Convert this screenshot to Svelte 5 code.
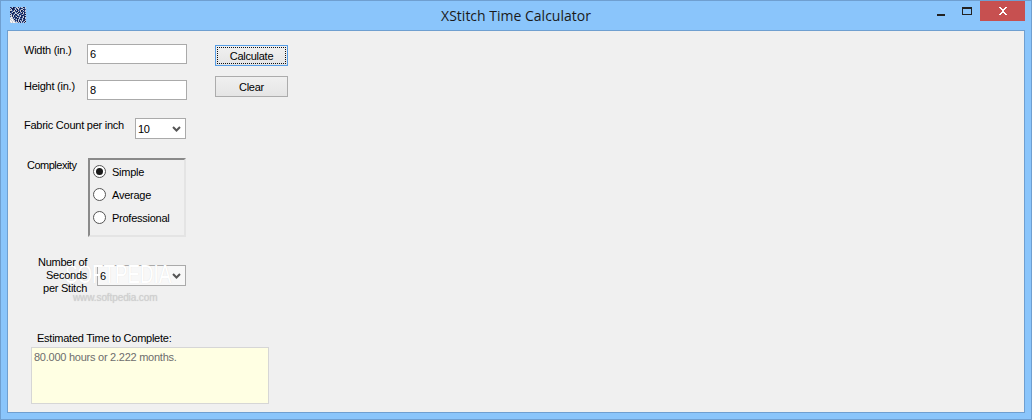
<script>
  // blotchy stitch pattern for the app icon, one char per pixel
  const stitches = [
    "ab.cab..a.b..ca.",
    ".aacb.a..bcab.b.",
    "b.caa.bc.ab..cab",
    "..ba.c.abb.ca.a.",
    "cab..bac.a.cbab.",
    "ab.ca.b.cab.a.cb",
    ".bcab..ab.bac.a.",
    "a.ab.ca..cab.bac",
    "..c.abab.b.acab.",
    "b.a.cb.cab.ab.ca",
    ".d.abac.b.acb.a.",
    "d..b.abca.bb.ac.",
    ".dd.cb.a.bca.bab",
    "d.d..abc.a.b.ca.",
    "dd.d.b.a.cb.ab.c",
    ".d.dd...b.a.b.a."
  ];
  const colors = { a: "#1b2b66", b: "#3f5f9f", c: "#0f1a42", d: "#f4f4f6" };
  const levels = ["Simple", "Average", "Professional"];
  let level = "Simple";
</script>

<div class="window">
  <header class="titlebar">
    <svg class="appicon" width="16" height="16" viewBox="0 0 16 16" shape-rendering="crispEdges">
      <rect width="16" height="16" fill="#c9cbd6" />
      {#each stitches as row, y}
        {#each row.split("") as c, x}
          {#if c !== "."}
            <rect {x} {y} width="1" height="1" fill={colors[c]} />
          {/if}
        {/each}
      {/each}
    </svg>
    <div class="title">XStitch Time Calculator</div>
    <div class="controls">
      <div class="ctl min"><span></span></div>
      <div class="ctl max"><span></span></div>
      <div class="ctl close">
        <svg width="10" height="8" viewBox="0 0 10 8" shape-rendering="crispEdges">
          <path d="M1 0h2v1h1v1h2V1h1V0h2v1H8v1H7v1H6v2h1v1h1v1h1v1H7V7H6V6H4v1H3v1H1V7h1V6h1V5h1V3H3V2H2V1H1z" fill="#fff" />
        </svg>
      </div>
    </div>
  </header>

  <main class="client">
    <div class="fields">
      <div class="row row-width">
        <span class="lbl">Width (in.)</span>
        <input class="box" value="6" />
      </div>
      <div class="row row-height">
        <span class="lbl">Height (in.)</span>
        <input class="box" value="8" />
      </div>
      <div class="row row-fabric">
        <span class="lbl">Fabric Count per inch</span>
        <div class="combo fabric"><span>10</span><svg class="chev" width="9" height="6" viewBox="0 0 9 6"><path d="M1 1l3.5 3.5L8 1" fill="none" stroke="#555" stroke-width="2" /></svg></div>
      </div>
      <div class="row row-complex">
        <span class="lbl">Complexity</span>
        <div class="group">
          {#each levels as l}
            <div class="radio">
              <span class="dot" class:on={l === level}></span>
              <span>{l}</span>
            </div>
          {/each}
        </div>
      </div>
      <div class="row row-seconds">
        <div class="combo seconds"><span class="val">6</span><svg class="chev" width="9" height="6" viewBox="0 0 9 6"><path d="M1 1l3.5 3.5L8 1" fill="none" stroke="#555" stroke-width="2" /></svg></div>
        <div class="mark">SOFTPEDIA</div>
        <div class="markurl">www.softpedia.com</div>
        <span class="lbl">Number of<br />Seconds<br />per Stitch</span>
      </div>
      <div class="result">
        <span class="lbl">Estimated Time to Complete:</span>
        <div class="output">80.000 hours or 2.222 months.</div>
      </div>
    </div>

    <div class="actions">
      <button class="btn focus"><span>Calculate</span></button>
      <button class="btn">Clear</button>
    </div>
  </main>
</div>

<style>
  :global(body) {
    margin: 0;
    background: #8ac5fb;
  }

  .window {
    width: 1032px;
    height: 420px;
    box-sizing: border-box;
    background: #8ac5fb;
    border: 1px solid #6f9fd0;
    display: flex;
    flex-direction: column;
    font-family: "Liberation Sans", sans-serif;
    font-size: 11px;
    letter-spacing: -0.25px;
    color: #000;
  }

  .titlebar {
    height: 29px;
    flex: none;
    display: flex;
    align-items: flex-start;
    position: relative;
  }

  .appicon {
    margin: 6px 0 0 9px;
  }

  .title {
    position: absolute;
    left: 0;
    right: 0;
    top: 5px;
    text-align: center;
    font-family: "Open Sans", sans-serif;
    font-size: 14px;
    letter-spacing: 0;
    color: #1a1a1a;
  }

  .controls {
    margin-left: auto;
    margin-right: 6px;
    display: flex;
  }

  .ctl {
    width: 26px;
    height: 20px;
    display: flex;
    align-items: center;
    justify-content: center;
  }

  .min span {
    width: 8px;
    height: 2px;
    background: #222;
    margin-top: 7px;
  }

  .max span {
    width: 10px;
    height: 8px;
    box-sizing: border-box;
    border: 1px solid #222;
    border-top-width: 2px;
    margin-top: -1px;
  }

  .close {
    width: 45px;
    background: #c75050;
  }

  .client {
    margin: 0 6px 6px 6px;
    flex: 1;
    border: 1px solid #6f9fd0;
    background: #f0f0f0;
    padding-left: 1px;
    display: flex;
    align-items: flex-start;
  }

  .fields {
    width: 206px;
    flex: none;
    display: flex;
    flex-direction: column;
  }

  .row {
    display: flex;
    align-items: flex-start;
    position: relative;
  }

  .lbl {
    white-space: nowrap;
  }

  .row-width {
    margin: 13px 0 0 15px;
  }

  .row-width .lbl,
  .row-height .lbl {
    width: 63px;
  }

  .row-height {
    margin: 16px 0 0 15px;
  }

  .box {
    width: 100px;
    height: 20px;
    box-sizing: border-box;
    border: 1px solid #aaa;
    background: #fff;
    padding: 0 2px 1px;
    font: inherit;
    letter-spacing: inherit;
    color: inherit;
    outline: none;
  }

  .row-fabric {
    margin: 18px 0 0 15px;
  }

  .row-fabric .lbl {
    width: 111px;
    margin-top: 1px;
  }

  .combo {
    height: 21px;
    box-sizing: border-box;
    border: 1px solid #aaa;
    background: #fff;
    display: flex;
    align-items: center;
    justify-content: space-between;
    padding: 0 4px 0 2px;
  }

  .fabric {
    width: 51px;
  }

  .row-complex {
    margin: 19px 0 0 18px;
  }

  .row-complex .lbl {
    width: 61px;
    margin-top: 1px;
    letter-spacing: -0.5px;
  }

  .group {
    width: 98px;
    height: 79px;
    box-sizing: border-box;
    border: 2px solid;
    border-color: #8a8a8a #e4e4e4 #e4e4e4 #8a8a8a;
    padding: 5px 0 0 3px;
    display: flex;
    flex-direction: column;
    gap: 10px;
  }

  .radio {
    height: 13px;
    display: flex;
    align-items: center;
    gap: 6px;
  }

  .dot {
    width: 13px;
    height: 13px;
    box-sizing: border-box;
    border: 1px solid #555;
    border-radius: 50%;
    background: #fff;
    display: flex;
    align-items: center;
    justify-content: center;
  }

  .dot.on::after {
    content: "";
    width: 7px;
    height: 7px;
    border-radius: 50%;
    background: #1a1a1a;
  }

  .row-seconds {
    margin: 18px 0 0 29px;
    flex-direction: row-reverse;
    justify-content: flex-end;
  }

  .row-seconds .lbl {
    width: 49px;
    text-align: right;
    line-height: 13px;
    margin: 1px 10px 0 0;
    position: relative;
  }

  .seconds {
    width: 89px;
    margin-top: 10px;
    background: #f8f8f8;
  }

  .val {
    position: relative;
    z-index: 1;
  }

  .mark {
    position: absolute;
    left: 27px;
    top: 5px;
    font-size: 25px;
    letter-spacing: 0;
    transform: scaleX(0.75);
    transform-origin: left top;
    color: #fff;
    text-shadow: 0 0 1px rgba(190, 190, 190, 0.45);
    white-space: nowrap;
  }

  .markurl {
    position: absolute;
    left: 35px;
    top: 37px;
    font-size: 10px;
    letter-spacing: -0.1px;
    color: #d0d0d0;
    text-shadow: 0 0 1px #ccc;
    white-space: nowrap;
  }

  .result {
    margin: 37px 0 0 22px;
    display: flex;
    flex-direction: column;
    position: relative;
  }

  .result .lbl {
    margin-left: 6px;
    margin-bottom: 3px;
  }

  .output {
    width: 238px;
    height: 57px;
    box-sizing: border-box;
    border: 1px solid #d6d6d6;
    background: #ffffe3;
    color: #6d6d6d;
    padding: 3px 2px;
  }

  .actions {
    display: flex;
    flex-direction: column;
    gap: 10px;
    margin: 14px 0 0 0;
  }

  .btn {
    width: 73px;
    height: 21px;
    box-sizing: border-box;
    border: 1px solid #acacac;
    background: linear-gradient(#f0f0f0, #e5e5e5);
    font: inherit;
    letter-spacing: inherit;
    color: inherit;
    padding: 0;
    display: flex;
    align-items: center;
    justify-content: center;
  }

  .btn.focus {
    border-color: #569de5;
    padding: 1px;
  }

  .btn.focus span {
    flex: 1;
    align-self: stretch;
    border: 1px dotted #111;
    display: flex;
    align-items: center;
    justify-content: center;
  }
</style>
